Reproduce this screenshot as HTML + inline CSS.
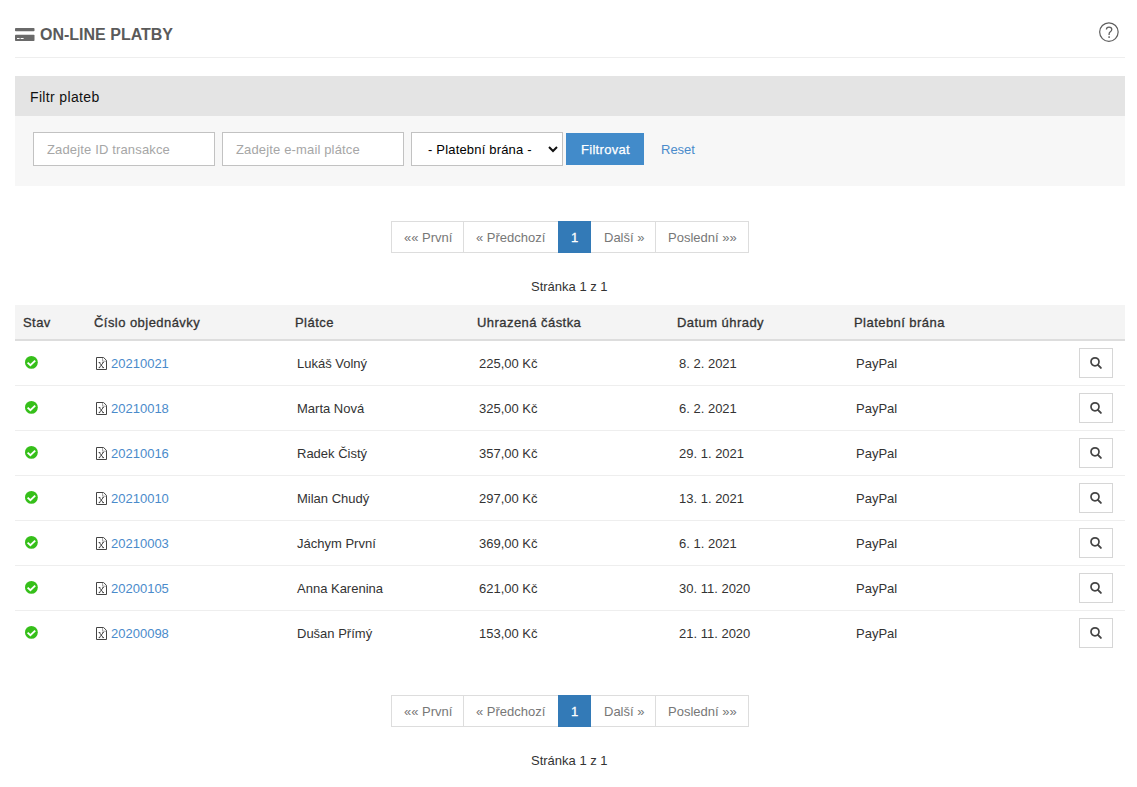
<!DOCTYPE html>
<html>
<head>
<meta charset="utf-8">
<style>
html,body{margin:0;padding:0;background:#fff;}
body{width:1137px;height:787px;position:relative;overflow:hidden;font-family:"Liberation Sans",sans-serif;font-size:13px;color:#333;}
.abs{position:absolute;}
.t{position:absolute;white-space:nowrap;line-height:1;z-index:3;}
.title{left:40px;top:27px;font-size:16px;font-weight:bold;color:#5a5a5a;}
.sep{left:15px;top:57px;width:1110px;height:1px;background:#eee;}
.ph{left:15px;top:76px;width:1110px;height:40px;background:#e4e4e4;}
.pb{left:15px;top:116px;width:1110px;height:70px;background:#f7f7f7;}
.inp{position:absolute;box-sizing:border-box;border:1px solid #c2c2c2;background:#fff;height:34px;top:132px;}
.ph-txt{color:#a6a6a6;letter-spacing:0.15px;}
.btn{left:566px;top:133px;width:78px;height:32px;background:#428bca;}
.pag{position:absolute;box-sizing:border-box;border:1px solid #ddd;height:32px;background:#fff;}
.pag.act{background:#337ab7;border-color:#337ab7;z-index:2;}
.thead{left:15px;top:305px;width:1110px;height:34px;background:#f4f4f4;}
.thb{left:15px;top:339px;width:1110px;height:2px;background:#ddd;}
.rowb{position:absolute;left:15px;width:1110px;height:1px;background:#eee;}
.th{font-weight:normal;color:#333;-webkit-text-stroke:0.3px #333;letter-spacing:0.45px;}
.lnk{color:#4a8bcb;}
.sbtn{position:absolute;left:1079px;width:34px;height:30px;box-sizing:border-box;border:1px solid #d6d6d6;background:#fff;}
</style>
</head>
<body>
<!-- title -->
<svg class="abs" style="left:15px;top:28px" width="20" height="14" viewBox="0 0 20 14">
  <rect x="0" y="0" width="19.5" height="3.3" rx="0.8" fill="#6a6a6a"/>
  <rect x="0" y="6.8" width="19.5" height="6.2" rx="0.8" fill="#6a6a6a"/>
  <rect x="2" y="10" width="2.6" height="1" fill="#fff"/>
  <rect x="5.6" y="10" width="3" height="1" fill="#fff"/>
</svg>
<div class="t title">ON-LINE PLATBY</div>
<svg class="abs" style="left:1098px;top:22px" width="22" height="22" viewBox="0 0 22 22">
  <circle cx="10.9" cy="10.05" r="9.25" fill="none" stroke="#5e5e5e" stroke-width="1.2"/>
  <path d="M8.4 7.5 C8.4 5.9 9.5 5 11 5 C12.6 5 13.8 6 13.8 7.4 C13.8 8.7 13 9.3 12.1 9.9 C11.4 10.4 11.1 10.9 11.1 11.9 V13" fill="none" stroke="#5e5e5e" stroke-width="1.25"/>
  <rect x="10.35" y="14.3" width="1.5" height="1.6" fill="#5e5e5e"/>
</svg>
<div class="abs sep"></div>

<!-- filter panel -->
<div class="abs ph"></div>
<div class="t" style="left:30px;top:90px;font-size:14px;color:#111;letter-spacing:0.35px;">Filtr plateb</div>
<div class="abs pb"></div>
<div class="inp" style="left:33px;width:182px;"></div>
<div class="t ph-txt" style="left:47px;top:143px;">Zadejte ID transakce</div>
<div class="inp" style="left:222px;width:182px;"></div>
<div class="t ph-txt" style="left:236px;top:143px;">Zadejte e-mail plátce</div>
<div class="inp" style="left:411px;width:152px;"></div>
<div class="t" style="left:428px;top:143px;color:#000;letter-spacing:0.18px;">- Platební brána -</div>
<svg class="abs" style="left:548px;top:146px" width="10" height="7" viewBox="0 0 10 7">
  <path d="M1 1 L5 5 L9 1" fill="none" stroke="#111" stroke-width="2"/>
</svg>
<div class="abs btn"></div>
<div class="t" style="left:581px;top:143px;color:#fff;letter-spacing:0.3px;-webkit-text-stroke:0.25px #fff;">Filtrovat</div>
<div class="t lnk" style="left:661px;top:143px;">Reset</div>

<!-- top pagination -->
<div class="pag" style="left:391px;top:221px;width:73px;"></div>
<div class="pag" style="left:463px;top:221px;width:96px;"></div>
<div class="pag act" style="left:558px;top:221px;width:33px;"></div>
<div class="pag" style="left:590px;top:221px;width:66px;"></div>
<div class="pag" style="left:655px;top:221px;width:94px;"></div>
<div class="t" style="left:404px;top:231px;color:#777;">«« První</div>
<div class="t" style="left:476px;top:231px;color:#777;">« Předchozí</div>
<div class="t" style="left:571px;top:231px;color:#fff;-webkit-text-stroke:0.3px #fff;">1</div>
<div class="t" style="left:604px;top:231px;color:#777;">Další »</div>
<div class="t" style="left:668px;top:231px;color:#777;">Poslední »»</div>
<div class="t" style="left:531px;top:280px;color:#333;">Stránka 1 z 1</div>

<!-- table -->
<div class="abs thead"></div>
<div class="abs thb"></div>
<div class="t th" style="left:23px;top:316px;">Stav</div>
<div class="t th" style="left:94px;top:316px;">Číslo objednávky</div>
<div class="t th" style="left:295px;top:316px;">Plátce</div>
<div class="t th" style="left:477px;top:316px;">Uhrazená částka</div>
<div class="t th" style="left:677px;top:316px;">Datum úhrady</div>
<div class="t th" style="left:854px;top:316px;">Platební brána</div>

<!--ROWS-->
<svg class="abs" style="left:25px;top:356px" width="14" height="14" viewBox="0 0 14 14"><circle cx="6.4" cy="6.4" r="6.4" fill="#36bf1a"/><path d="M2.6 6.6 L5.4 9.2 L10.2 4.6" fill="none" stroke="#fff" stroke-width="1.9"/></svg>
<svg class="abs" style="left:96px;top:357px" width="11" height="13" viewBox="0 0 11 13"><path d="M0.5 0.5 H7.6 L10.5 3.4 V12.5 H0.5 Z" fill="none" stroke="#444" stroke-width="1"/><path d="M6.6 0.8 V4.2 H10.3" fill="none" stroke="#888" stroke-width="0.8"/><path d="M3.4 5.6 L7.2 10.6 M7.2 5.6 L3.4 10.6 M2.7 5.5 H4.3 M6.4 5.5 H7.8 M2.7 10.6 H4.2 M6.4 10.6 H8" fill="none" stroke="#333" stroke-width="0.85"/></svg>
<div class="t lnk" style="left:111px;top:357px">20210021</div>
<div class="t" style="left:297px;top:357px">Lukáš Volný</div>
<div class="t" style="left:479px;top:357px">225,00 Kč</div>
<div class="t" style="left:679px;top:357px">8. 2. 2021</div>
<div class="t" style="left:856px;top:357px">PayPal</div>
<div class="sbtn" style="top:348px"></div>
<svg class="abs" style="left:1089px;top:356px" width="14" height="14" viewBox="0 0 14 14"><circle cx="6" cy="5.8" r="4" fill="none" stroke="#444" stroke-width="1.7"/><path d="M8.9 8.8 L11.9 11.9" stroke="#444" stroke-width="1.9" stroke-linecap="round"/></svg>
<div class="rowb" style="top:385px"></div>
<svg class="abs" style="left:25px;top:401px" width="14" height="14" viewBox="0 0 14 14"><circle cx="6.4" cy="6.4" r="6.4" fill="#36bf1a"/><path d="M2.6 6.6 L5.4 9.2 L10.2 4.6" fill="none" stroke="#fff" stroke-width="1.9"/></svg>
<svg class="abs" style="left:96px;top:402px" width="11" height="13" viewBox="0 0 11 13"><path d="M0.5 0.5 H7.6 L10.5 3.4 V12.5 H0.5 Z" fill="none" stroke="#444" stroke-width="1"/><path d="M6.6 0.8 V4.2 H10.3" fill="none" stroke="#888" stroke-width="0.8"/><path d="M3.4 5.6 L7.2 10.6 M7.2 5.6 L3.4 10.6 M2.7 5.5 H4.3 M6.4 5.5 H7.8 M2.7 10.6 H4.2 M6.4 10.6 H8" fill="none" stroke="#333" stroke-width="0.85"/></svg>
<div class="t lnk" style="left:111px;top:402px">20210018</div>
<div class="t" style="left:297px;top:402px">Marta Nová</div>
<div class="t" style="left:479px;top:402px">325,00 Kč</div>
<div class="t" style="left:679px;top:402px">6. 2. 2021</div>
<div class="t" style="left:856px;top:402px">PayPal</div>
<div class="sbtn" style="top:393px"></div>
<svg class="abs" style="left:1089px;top:401px" width="14" height="14" viewBox="0 0 14 14"><circle cx="6" cy="5.8" r="4" fill="none" stroke="#444" stroke-width="1.7"/><path d="M8.9 8.8 L11.9 11.9" stroke="#444" stroke-width="1.9" stroke-linecap="round"/></svg>
<div class="rowb" style="top:430px"></div>
<svg class="abs" style="left:25px;top:446px" width="14" height="14" viewBox="0 0 14 14"><circle cx="6.4" cy="6.4" r="6.4" fill="#36bf1a"/><path d="M2.6 6.6 L5.4 9.2 L10.2 4.6" fill="none" stroke="#fff" stroke-width="1.9"/></svg>
<svg class="abs" style="left:96px;top:447px" width="11" height="13" viewBox="0 0 11 13"><path d="M0.5 0.5 H7.6 L10.5 3.4 V12.5 H0.5 Z" fill="none" stroke="#444" stroke-width="1"/><path d="M6.6 0.8 V4.2 H10.3" fill="none" stroke="#888" stroke-width="0.8"/><path d="M3.4 5.6 L7.2 10.6 M7.2 5.6 L3.4 10.6 M2.7 5.5 H4.3 M6.4 5.5 H7.8 M2.7 10.6 H4.2 M6.4 10.6 H8" fill="none" stroke="#333" stroke-width="0.85"/></svg>
<div class="t lnk" style="left:111px;top:447px">20210016</div>
<div class="t" style="left:297px;top:447px">Radek Čistý</div>
<div class="t" style="left:479px;top:447px">357,00 Kč</div>
<div class="t" style="left:679px;top:447px">29. 1. 2021</div>
<div class="t" style="left:856px;top:447px">PayPal</div>
<div class="sbtn" style="top:438px"></div>
<svg class="abs" style="left:1089px;top:446px" width="14" height="14" viewBox="0 0 14 14"><circle cx="6" cy="5.8" r="4" fill="none" stroke="#444" stroke-width="1.7"/><path d="M8.9 8.8 L11.9 11.9" stroke="#444" stroke-width="1.9" stroke-linecap="round"/></svg>
<div class="rowb" style="top:475px"></div>
<svg class="abs" style="left:25px;top:491px" width="14" height="14" viewBox="0 0 14 14"><circle cx="6.4" cy="6.4" r="6.4" fill="#36bf1a"/><path d="M2.6 6.6 L5.4 9.2 L10.2 4.6" fill="none" stroke="#fff" stroke-width="1.9"/></svg>
<svg class="abs" style="left:96px;top:492px" width="11" height="13" viewBox="0 0 11 13"><path d="M0.5 0.5 H7.6 L10.5 3.4 V12.5 H0.5 Z" fill="none" stroke="#444" stroke-width="1"/><path d="M6.6 0.8 V4.2 H10.3" fill="none" stroke="#888" stroke-width="0.8"/><path d="M3.4 5.6 L7.2 10.6 M7.2 5.6 L3.4 10.6 M2.7 5.5 H4.3 M6.4 5.5 H7.8 M2.7 10.6 H4.2 M6.4 10.6 H8" fill="none" stroke="#333" stroke-width="0.85"/></svg>
<div class="t lnk" style="left:111px;top:492px">20210010</div>
<div class="t" style="left:297px;top:492px">Milan Chudý</div>
<div class="t" style="left:479px;top:492px">297,00 Kč</div>
<div class="t" style="left:679px;top:492px">13. 1. 2021</div>
<div class="t" style="left:856px;top:492px">PayPal</div>
<div class="sbtn" style="top:483px"></div>
<svg class="abs" style="left:1089px;top:491px" width="14" height="14" viewBox="0 0 14 14"><circle cx="6" cy="5.8" r="4" fill="none" stroke="#444" stroke-width="1.7"/><path d="M8.9 8.8 L11.9 11.9" stroke="#444" stroke-width="1.9" stroke-linecap="round"/></svg>
<div class="rowb" style="top:520px"></div>
<svg class="abs" style="left:25px;top:536px" width="14" height="14" viewBox="0 0 14 14"><circle cx="6.4" cy="6.4" r="6.4" fill="#36bf1a"/><path d="M2.6 6.6 L5.4 9.2 L10.2 4.6" fill="none" stroke="#fff" stroke-width="1.9"/></svg>
<svg class="abs" style="left:96px;top:537px" width="11" height="13" viewBox="0 0 11 13"><path d="M0.5 0.5 H7.6 L10.5 3.4 V12.5 H0.5 Z" fill="none" stroke="#444" stroke-width="1"/><path d="M6.6 0.8 V4.2 H10.3" fill="none" stroke="#888" stroke-width="0.8"/><path d="M3.4 5.6 L7.2 10.6 M7.2 5.6 L3.4 10.6 M2.7 5.5 H4.3 M6.4 5.5 H7.8 M2.7 10.6 H4.2 M6.4 10.6 H8" fill="none" stroke="#333" stroke-width="0.85"/></svg>
<div class="t lnk" style="left:111px;top:537px">20210003</div>
<div class="t" style="left:297px;top:537px">Jáchym První</div>
<div class="t" style="left:479px;top:537px">369,00 Kč</div>
<div class="t" style="left:679px;top:537px">6. 1. 2021</div>
<div class="t" style="left:856px;top:537px">PayPal</div>
<div class="sbtn" style="top:528px"></div>
<svg class="abs" style="left:1089px;top:536px" width="14" height="14" viewBox="0 0 14 14"><circle cx="6" cy="5.8" r="4" fill="none" stroke="#444" stroke-width="1.7"/><path d="M8.9 8.8 L11.9 11.9" stroke="#444" stroke-width="1.9" stroke-linecap="round"/></svg>
<div class="rowb" style="top:565px"></div>
<svg class="abs" style="left:25px;top:581px" width="14" height="14" viewBox="0 0 14 14"><circle cx="6.4" cy="6.4" r="6.4" fill="#36bf1a"/><path d="M2.6 6.6 L5.4 9.2 L10.2 4.6" fill="none" stroke="#fff" stroke-width="1.9"/></svg>
<svg class="abs" style="left:96px;top:582px" width="11" height="13" viewBox="0 0 11 13"><path d="M0.5 0.5 H7.6 L10.5 3.4 V12.5 H0.5 Z" fill="none" stroke="#444" stroke-width="1"/><path d="M6.6 0.8 V4.2 H10.3" fill="none" stroke="#888" stroke-width="0.8"/><path d="M3.4 5.6 L7.2 10.6 M7.2 5.6 L3.4 10.6 M2.7 5.5 H4.3 M6.4 5.5 H7.8 M2.7 10.6 H4.2 M6.4 10.6 H8" fill="none" stroke="#333" stroke-width="0.85"/></svg>
<div class="t lnk" style="left:111px;top:582px">20200105</div>
<div class="t" style="left:297px;top:582px">Anna Karenina</div>
<div class="t" style="left:479px;top:582px">621,00 Kč</div>
<div class="t" style="left:679px;top:582px">30. 11. 2020</div>
<div class="t" style="left:856px;top:582px">PayPal</div>
<div class="sbtn" style="top:573px"></div>
<svg class="abs" style="left:1089px;top:581px" width="14" height="14" viewBox="0 0 14 14"><circle cx="6" cy="5.8" r="4" fill="none" stroke="#444" stroke-width="1.7"/><path d="M8.9 8.8 L11.9 11.9" stroke="#444" stroke-width="1.9" stroke-linecap="round"/></svg>
<div class="rowb" style="top:610px"></div>
<svg class="abs" style="left:25px;top:626px" width="14" height="14" viewBox="0 0 14 14"><circle cx="6.4" cy="6.4" r="6.4" fill="#36bf1a"/><path d="M2.6 6.6 L5.4 9.2 L10.2 4.6" fill="none" stroke="#fff" stroke-width="1.9"/></svg>
<svg class="abs" style="left:96px;top:627px" width="11" height="13" viewBox="0 0 11 13"><path d="M0.5 0.5 H7.6 L10.5 3.4 V12.5 H0.5 Z" fill="none" stroke="#444" stroke-width="1"/><path d="M6.6 0.8 V4.2 H10.3" fill="none" stroke="#888" stroke-width="0.8"/><path d="M3.4 5.6 L7.2 10.6 M7.2 5.6 L3.4 10.6 M2.7 5.5 H4.3 M6.4 5.5 H7.8 M2.7 10.6 H4.2 M6.4 10.6 H8" fill="none" stroke="#333" stroke-width="0.85"/></svg>
<div class="t lnk" style="left:111px;top:627px">20200098</div>
<div class="t" style="left:297px;top:627px">Dušan Přímý</div>
<div class="t" style="left:479px;top:627px">153,00 Kč</div>
<div class="t" style="left:679px;top:627px">21. 11. 2020</div>
<div class="t" style="left:856px;top:627px">PayPal</div>
<div class="sbtn" style="top:618px"></div>
<svg class="abs" style="left:1089px;top:626px" width="14" height="14" viewBox="0 0 14 14"><circle cx="6" cy="5.8" r="4" fill="none" stroke="#444" stroke-width="1.7"/><path d="M8.9 8.8 L11.9 11.9" stroke="#444" stroke-width="1.9" stroke-linecap="round"/></svg>
<!--/ROWS-->

<!-- bottom pagination -->
<div class="pag" style="left:391px;top:695px;width:73px;"></div>
<div class="pag" style="left:463px;top:695px;width:96px;"></div>
<div class="pag act" style="left:558px;top:695px;width:33px;"></div>
<div class="pag" style="left:590px;top:695px;width:66px;"></div>
<div class="pag" style="left:655px;top:695px;width:94px;"></div>
<div class="t" style="left:404px;top:705px;color:#777;">«« První</div>
<div class="t" style="left:476px;top:705px;color:#777;">« Předchozí</div>
<div class="t" style="left:571px;top:705px;color:#fff;-webkit-text-stroke:0.3px #fff;">1</div>
<div class="t" style="left:604px;top:705px;color:#777;">Další »</div>
<div class="t" style="left:668px;top:705px;color:#777;">Poslední »»</div>
<div class="t" style="left:531px;top:754px;color:#333;">Stránka 1 z 1</div>
</body>
</html>
